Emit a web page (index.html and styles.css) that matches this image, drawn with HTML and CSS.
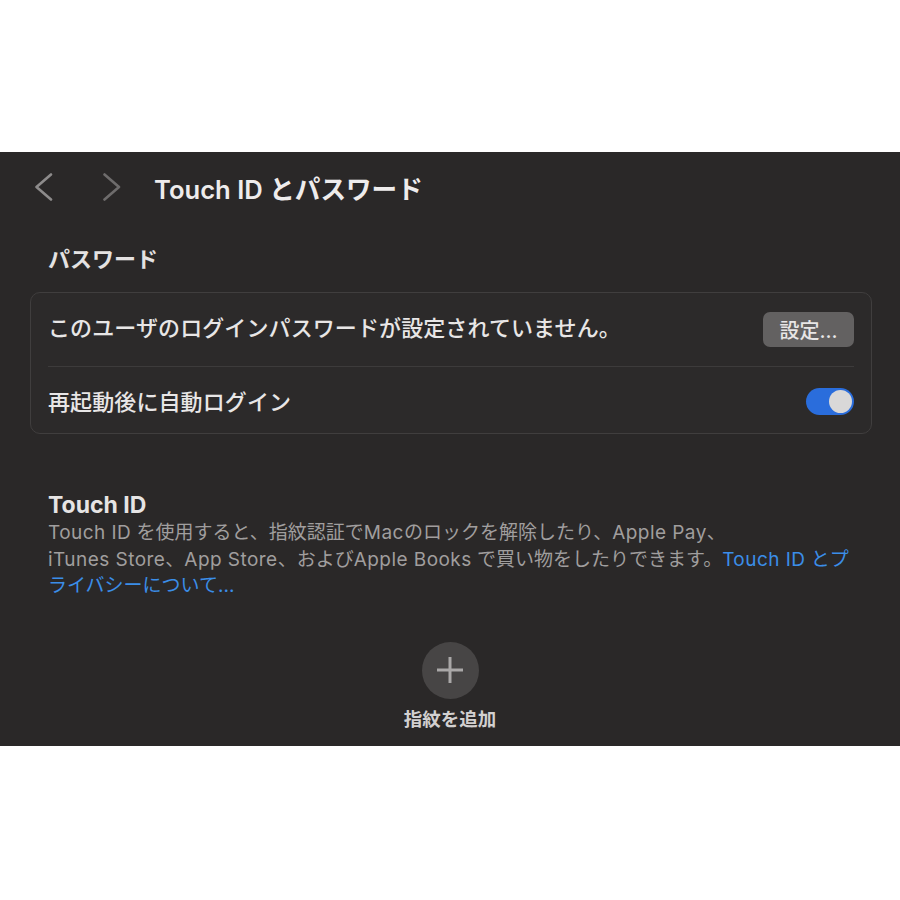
FILE: index.html
```html
<!DOCTYPE html>
<html lang="ja">
<head>
<meta charset="utf-8">
<title>Touch ID とパスワード</title>
<link rel="stylesheet" href="styles.css">
</head>
<body>
<div class="page">
  <div class="window">
    <header class="toolbar">
      <svg class="chev back" width="20" height="28" viewBox="0 0 20 28"><path d="M17 1.5 L2.5 14 L17 26.5"/></svg>
      <svg class="chev fwd" width="20" height="28" viewBox="0 0 20 28"><path d="M2.5 1.5 L17 14 L2.5 26.5"/></svg>
      <h1 class="title">Touch ID とパスワード</h1>
    </header>

    <h2 class="section-label">パスワード</h2>
    <div class="card">
      <div class="row row-first">
        <span class="row-text row-text-first">このユーザのログインパスワードが設定されていません。</span>
        <button class="btn">設定...</button>
      </div>
      <div class="row row-second">
        <span class="row-text">再起動後に自動ログイン</span>
        <span class="toggle"><span class="knob"></span></span>
      </div>
    </div>

    <section class="touch">
      <h2 class="touch-title">Touch ID</h2>
      <p class="desc"><span class="en">Touch ID</span> を使用すると、指紋認証で<span class="en">Mac</span>のロックを解除したり、<span class="en">Apple Pay</span>、<br><span class="en">iTunes Store</span>、<span class="en">App Store</span>、および<span class="en">Apple Books</span> で買い物をしたりできます。<a class="link" href="#"><span class="en">Touch ID</span> とプ<br>ライバシーについて...</a></p>
    </section>

    <div class="add">
      <div class="add-circle">
        <svg width="30" height="30" viewBox="0 0 30 30"><path d="M15 2 V28 M2 15 H28"/></svg>
      </div>
      <div class="add-label">指紋を追加</div>
    </div>
  </div>
</div>
</body>
</html>
```

FILE: styles.css
```css
* { box-sizing: border-box; }
html, body { margin: 0; padding: 0; background: #ffffff; }
body {
  font-family: "Inter", "Noto Sans CJK JP", sans-serif;
  color: #e6e4e4;
}
.page { padding-top: 152px; }
.window {
  height: 594px;
  background: #2a2828;
  overflow: hidden;
}
.toolbar {
  height: 70px;
  display: flex;
  align-items: center;
  padding-left: 34px;
}
.chev { fill: none; stroke-width: 2.6; stroke-linecap: round; stroke-linejoin: round; }
.chev.back { stroke: #8d8b8b; }
.chev.fwd { stroke: #6e6c6c; margin-left: 48px; }
.title {
  margin: 0 0 0 32px;
  font-size: 25.6px;
  font-weight: 600;
  color: #eeecec;
}
.section-label {
  margin: 22px 0 0 48px;
  font-size: 22px;
  line-height: 30px;
  font-weight: 700;
  color: #e4e2e2;
}
.card {
  margin: 18px 28px 0 30px;
  border: 1px solid #403e3e;
  border-radius: 10px;
  background: #2c2a2a;
  padding: 0 17px;
}
.row {
  display: flex;
  align-items: center;
  justify-content: space-between;
}
.row-first { height: 73px; padding-bottom: 3px; }
.row-second { height: 67px; border-top: 1px solid #3d3b3b; }
.row-text {
  font-size: 22px;
  font-weight: 500;
  color: #e8e6e6;
  letter-spacing: 0.1px;
}
.row-text-first { margin-bottom: 5px; }
.btn {
  font-family: inherit;
  width: 91px;
  height: 35px;
  border: none;
  border-radius: 7px;
  background: #636161;
  color: #e8e6e6;
  font-size: 20px;
  font-weight: 500;
  padding: 0;
  margin-top: 2px;
}
.toggle {
  width: 48px;
  height: 27px;
  border-radius: 14px;
  background: #2a6ddc;
  display: flex;
  align-items: center;
  justify-content: flex-end;
  padding-right: 2px;
  margin-top: 3px;
}
.knob {
  width: 23px;
  height: 23px;
  border-radius: 50%;
  background: #d9d8d8;
}
.touch { margin: 56px 40px 0 48px; }
.touch-title {
  margin: 0;
  font-size: 23px;
  line-height: 30px;
  font-weight: 700;
  color: #e6e4e4;
}
.desc {
  margin: 0;
  font-size: 19px;
  line-height: 26.5px;
  color: #a09e9e;
}
.en { letter-spacing: 0.45px; }
.link { color: #3b8ee8; text-decoration: none; }
.add {
  display: flex;
  flex-direction: column;
  align-items: center;
  margin-top: 42px;
}
.add-circle {
  width: 57px;
  height: 57px;
  border-radius: 50%;
  background: #474545;
  display: flex;
  align-items: center;
  justify-content: center;
}
.add-circle svg path { stroke: #aaa8a8; stroke-width: 3; fill: none; }
.add-label {
  margin-top: 7px;
  font-size: 18.5px;
  line-height: 26px;
  font-weight: 700;
  color: #d2d0d0;
}
```
